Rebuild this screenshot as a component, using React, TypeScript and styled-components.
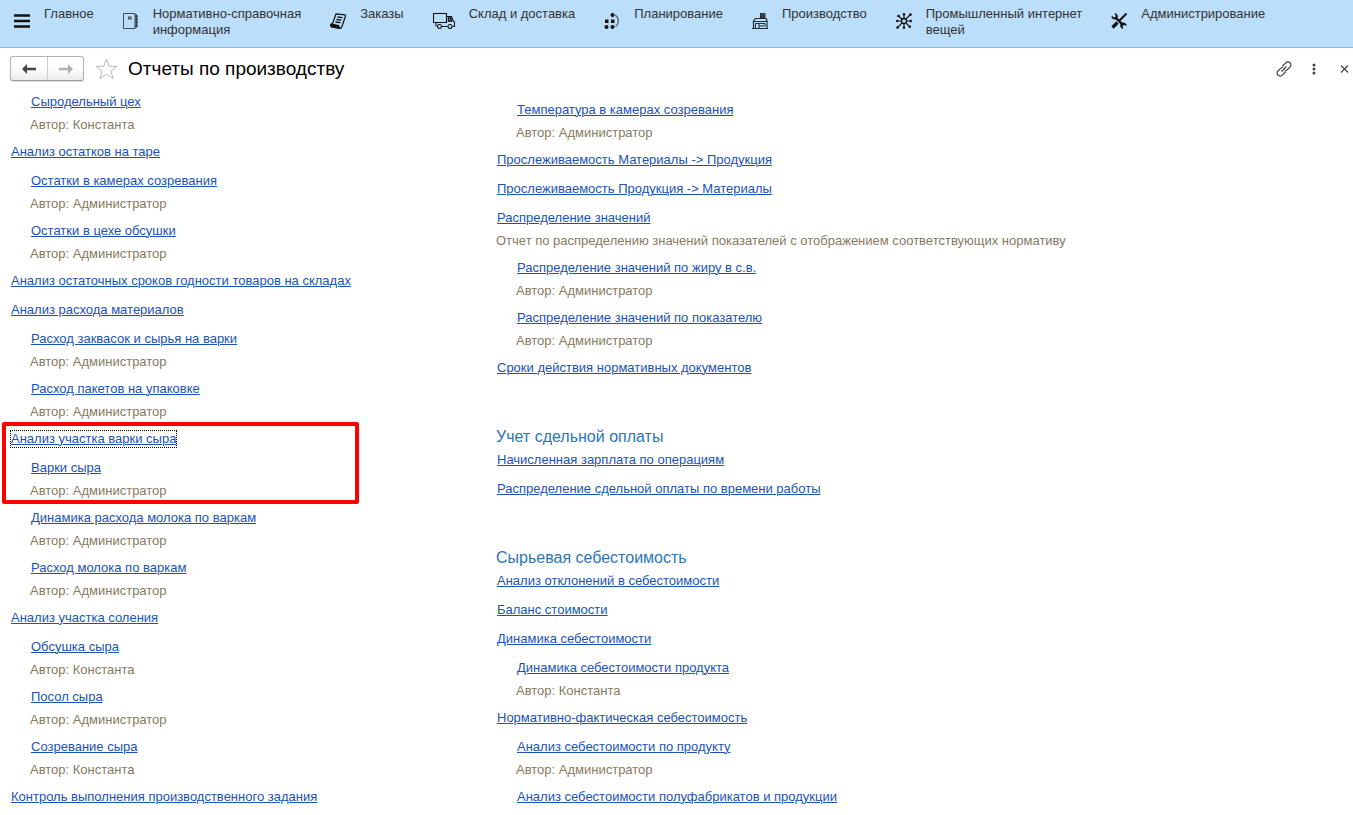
import React from 'react';
import styled, { createGlobalStyle, css } from 'styled-components';

const GlobalStyle = createGlobalStyle`
  *, *::after { box-sizing: border-box; }
  body {
    margin: 0;
    background: #fff;
    color: #000;
    font: 13px/16px "Liberation Sans", Arial, sans-serif;
  }
  button { font: inherit; color: inherit; cursor: pointer; }
`;

const NavBar = styled.nav`
  display: flex;
  align-items: flex-start;
  gap: 29px;
  min-height: 48px;
  padding: 6px 14px 8px;
  background: #bbdefb;
  border-bottom: 1px solid #93b3d3;
`;

const NavItem = styled.button`
  display: flex;
  align-items: flex-start;
  gap: 14px;
  padding: 0;
  border: 0;
  background: none;
  color: #333;
  text-align: left;
  white-space: pre-line;
`;

const NavIcon = styled.svg`
  flex: none;
  margin-top: 7px;
  color: #111;
`;

const TitleBar = styled.header`
  display: flex;
  align-items: center;
  height: 45px;
  padding: 0 3px 4px 10px;
`;

const History = styled.div`
  display: flex;
  height: 25px;
  border: 1px solid #b3b3b3;
  border-bottom-color: #999;
  border-radius: 3px;
  background: linear-gradient(#fff 40%, #ececec);
  box-shadow: 0 1px 1px #ddd;
`;

const HistoryButton = styled.button`
  display: flex;
  align-items: center;
  justify-content: center;
  width: 36px;
  padding: 0;
  border: 0;
  background: none;
  color: #444;
  & + & { border-left: 1px solid #ccc; }
  &:disabled { color: #b0b0b0; }
`;

const IconButton = styled.button`
  display: flex;
  padding: 0;
  border: 0;
  background: none;
  color: #444;
`;

const StarButton = styled(IconButton)`
  margin: 0 10px 0 11px;
`;

const Title = styled.h1`
  flex: 1;
  margin: 0;
  font-size: 19px;
  line-height: 24px;
  font-weight: 400;
`;

const Tools = styled.div`
  display: flex;
  align-items: center;
  gap: 14px;
`;

const Columns = styled.main`
  display: grid;
  grid-template-columns: minmax(0, 486px) minmax(0, 1fr);
  align-items: start;
  padding-left: 10px;
`;

const Column = styled.div<{ $lowered?: boolean }>`
  display: flex;
  flex-direction: column;
  gap: 50px;
  padding-top: ${(p) => (p.$lowered ? 8 : 0)}px;
`;

const List = styled.ul`
  display: flex;
  flex-direction: column;
  gap: 11px;
  margin: 0;
  padding: 0;
  list-style: none;
`;

const Entry = styled.li<{ $nested?: boolean }>`
  display: flex;
  flex-direction: column;
  align-items: flex-start;
  gap: 7px;
  padding-left: ${(p) => (p.$nested ? 20 : 0)}px;
`;

const ReportLink = styled.a<{ $focused?: boolean }>`
  border: 1px solid transparent;
  color: #1a53b5;
  text-decoration: underline;
  text-underline-offset: 1px;
  text-decoration-thickness: 1px;
  ${(p) =>
    p.$focused &&
    css`
      border: 1px dotted #000;
    `}
`;

const Note = styled.span`
  color: #857b5f;
  line-height: 14px;
`;

const SectionTitle = styled.h2`
  margin: 0 0 4px;
  color: #2d75b8;
  font-size: 16px;
  line-height: 20px;
  font-weight: 400;
`;

const Marked = styled.li`
  position: relative;
  &::after {
    content: "";
    position: absolute;
    top: -8px;
    left: -8px;
    width: 357px;
    bottom: -6px;
    border: 4px solid #fe0000;
    border-radius: 2px;
    pointer-events: none;
  }
`;

type Report = { name: string; note?: string; nested?: boolean; focused?: boolean };

const admin = 'Автор: Администратор';
const konstanta = 'Автор: Константа';

const leftTop: Report[] = [
  { name: 'Сыродельный цех', note: konstanta, nested: true },
  { name: 'Анализ остатков на таре' },
  { name: 'Остатки в камерах созревания', note: admin, nested: true },
  { name: 'Остатки в цехе обсушки', note: admin, nested: true },
  { name: 'Анализ остаточных сроков годности товаров на складах' },
  { name: 'Анализ расхода материалов' },
  { name: 'Расход заквасок и сырья на варки', note: admin, nested: true },
  { name: 'Расход пакетов на упаковке', note: admin, nested: true },
];

const leftMarked: Report[] = [
  { name: 'Анализ участка варки сыра', focused: true },
  { name: 'Варки сыра', note: admin, nested: true },
];

const leftBottom: Report[] = [
  { name: 'Динамика расхода молока по варкам', note: admin, nested: true },
  { name: 'Расход молока по варкам', note: admin, nested: true },
  { name: 'Анализ участка соления' },
  { name: 'Обсушка сыра', note: konstanta, nested: true },
  { name: 'Посол сыра', note: admin, nested: true },
  { name: 'Созревание сыра', note: konstanta, nested: true },
  { name: 'Контроль выполнения производственного задания' },
];

const rightTop: Report[] = [
  { name: 'Температура в камерах созревания', note: admin, nested: true },
  { name: 'Прослеживаемость Материалы -> Продукция' },
  { name: 'Прослеживаемость Продукция -> Материалы' },
  {
    name: 'Распределение значений',
    note: 'Отчет по распределению значений показателей с отображением соответствующих нормативу',
  },
  { name: 'Распределение значений по жиру в с.в.', note: admin, nested: true },
  { name: 'Распределение значений по показателю', note: admin, nested: true },
  { name: 'Сроки действия нормативных документов' },
];

const piecework: Report[] = [
  { name: 'Начисленная зарплата по операциям' },
  { name: 'Распределение сдельной оплаты по времени работы' },
];

const rawCost: Report[] = [
  { name: 'Анализ отклонений в себестоимости' },
  { name: 'Баланс стоимости' },
  { name: 'Динамика себестоимости' },
  { name: 'Динамика себестоимости продукта', note: konstanta, nested: true },
  { name: 'Нормативно-фактическая себестоимость' },
  { name: 'Анализ себестоимости по продукту', note: admin, nested: true },
  { name: 'Анализ себестоимости полуфабрикатов и продукции', nested: true },
];

const Entries = ({ items }: { items: Report[] }) => (
  <>
    {items.map((r) => (
      <Entry key={r.name} $nested={r.nested}>
        <ReportLink href="#" $focused={r.focused}>{r.name}</ReportLink>
        {r.note && <Note>{r.note}</Note>}
      </Entry>
    ))}
  </>
);

type Section = { label: string; width?: number; icon: React.ReactNode };

const sections: Section[] = [
  {
    label: 'Главное',
    icon: <path d="M0 2.500h16M0 8h16M0 13.500h16" stroke="currentColor" strokeWidth="2.600" />,
  },
  {
    label: 'Нормативно-справочная\nинформация',
    icon: (
      <g fill="none" stroke="#3c4a56">
        <path d="M.5.5h11.500v15H.5z" />
        <path d="M5.500 4h2.500v2H5.500z" strokeWidth="1.200" />
        <path d="M12 1.500h1.500v13H12" />
        <path d="M12 3.500h3M12 6.500h3M12 9.500h3M12 12.500h3" strokeWidth="1.800" />
      </g>
    ),
  },
  {
    label: 'Заказы',
    icon: (
      <g fill="none" stroke="currentColor" strokeLinejoin="round">
        <path d="M6 .8l9 1c.6.1.8.5.6 1L12 13.500c-.5 1.500-1.200 2-2.500 1.800L2 14c-1.300-.3-1.700-1.700-1-3h1.500z" strokeWidth="1.200" />
        <path d="M1 11l8 1.500c0 1.500.5 2.500 1.200 2.700L2 14.200C1 14 .5 12.500 1 11z" fill="currentColor" />
        <path d="M7.500 4l5 .6M6.500 6.500l5 .6M5.500 9l5 .7" strokeWidth="1.300" />
      </g>
    ),
  },
  {
    label: 'Склад и доставка',
    width: 22,
    icon: (
      <g fill="none" stroke="currentColor" strokeWidth="1.100">
        <path d="M3 13.500V9.500H.5v-9h13v9H3M14 3.500h4.500l1.500 4 1.500 1.500v4.500h-2M8.500 13.500h6M13.500 9.500v-6" />
        <path d="M15.500 5h2l1 3h-3z" strokeWidth="1.400" />
        <circle cx="6.500" cy="13.500" r="2" />
        <circle cx="17" cy="13.500" r="2" />
      </g>
    ),
  },
  {
    label: 'Планирование',
    icon: (
      <g fill="currentColor">
        <circle cx="8.500" cy="2" r="2" />
        <path d="M1 6.500h3.500v3.500H1z" />
        <path d="M7 6.500h3.500v3.500H7z" />
        <circle cx="2.500" cy="14" r="2" />
        <circle cx="8.500" cy="14" r="2" />
        <path d="M11 2c4 2 4.500 9 .5 11.500" fill="none" stroke="#4b5d6c" strokeWidth="1.200" />
      </g>
    ),
  },
  {
    label: 'Производство',
    icon: (
      <g fill="none" stroke="#222c34">
        <path d="M1.500 15V8l2-2.500H14l1 2V15M0 15.500h16M1.500 8.500H15" strokeWidth="1.200" />
        <path d="M3.500 15v-4.500H7V15M7 10.500h6V13H7" />
        <path d="M8 0h5.500v5.500H8z" fill="#222c34" stroke="none" />
        <path d="M10 0v4M12 0v4" stroke="#6a7d8e" strokeWidth=".6" />
      </g>
    ),
  },
  {
    label: 'Промышленный интернет\nвещей',
    icon: (
      <g fill="currentColor" stroke="currentColor">
        <circle cx="8" cy="8" r="2.500" fill="none" strokeWidth="1.300" />
        <path d="M8 1v4.500M8 10.500V15M1 8h4.500M10.500 8H15M2 2.500l4.200 3.700M14.500 1.500L9.800 6.200M1.500 14.500l4.700-4.700M9.800 9.800l4 4" strokeWidth="1.200" />
        <circle cx="8" cy="1.200" r="1.200" stroke="none" />
        <circle cx="8" cy="14.800" r="1.200" stroke="none" />
        <circle cx="1.200" cy="8" r="1.200" stroke="none" />
        <circle cx="14.800" cy="8" r="1.200" stroke="none" />
        <circle cx="2.500" cy="3" r="1.300" stroke="none" />
        <circle cx="14.500" cy="1.500" r="1.300" stroke="none" />
        <circle cx="1.500" cy="14.500" r="1.300" stroke="none" />
        <circle cx="13.800" cy="13.800" r="1.300" stroke="none" />
      </g>
    ),
  },
  {
    label: 'Администрирование',
    icon: (
      <g fill="none" stroke="currentColor">
        <path d="M4 4l8.500 8.500" strokeWidth="2.400" />
        <path d="M1 3.500A3 3 0 0 0 5.500 5 3 3 0 0 0 4 .8M15 12.500A3 3 0 0 0 10.500 11 3 3 0 0 0 12 15.200" strokeWidth="1.800" />
        <path d="M15.500.5L8.500 7.500" strokeWidth="2" />
        <path d="M6.500 9.500L1.500 14.500" strokeWidth="3.200" />
      </g>
    ),
  },
];

const ArrowIcon = () => (
  <svg width="14" height="12" viewBox="0 0 14 12" aria-hidden="true">
    <path d="M0 6l5-5v3.700h9v2.600H5V11z" fill="currentColor" />
  </svg>
);

const Flipped = styled.span`
  display: flex;
  transform: rotate(180deg);
`;

export default function App() {
  return (
    <>
      <GlobalStyle />
      <NavBar>
        {sections.map((s) => (
          <NavItem key={s.label} type="button">
            <NavIcon width={s.width ?? 16} height="16" viewBox={`0 0 ${s.width ?? 16} 16`} aria-hidden="true">
              {s.icon}
            </NavIcon>
            <span>{s.label}</span>
          </NavItem>
        ))}
      </NavBar>
      <TitleBar>
        <History>
          <HistoryButton type="button" aria-label="Назад">
            <ArrowIcon />
          </HistoryButton>
          <HistoryButton type="button" aria-label="Вперед" disabled>
            <Flipped>
              <ArrowIcon />
            </Flipped>
          </HistoryButton>
        </History>
        <StarButton type="button" aria-label="В избранное">
          <svg width="23" height="22" viewBox="0 0 23 22" aria-hidden="true">
            <path d="M11.500 1l2.700 7.300h7.800l-6.200 4.800 2.300 7.600-6.600-4.600-6.600 4.600 2.300-7.600L1 8.300h7.800z" fill="#fff" stroke="#b4bac2" />
          </svg>
        </StarButton>
        <Title>Отчеты по производству</Title>
        <Tools>
          <IconButton type="button" aria-label="Получить ссылку">
            <svg width="16" height="16" viewBox="0 0 16 16" fill="none" stroke="currentColor" strokeWidth="1.200" aria-hidden="true">
              <path d="M6.500 5l3.200-3.200a2.900 2.900 0 0 1 4.300 0 2.900 2.900 0 0 1 0 4.200L10.800 9.200a2.900 2.900 0 0 1-2.300.8M9.500 11l-3.200 3.200a2.900 2.900 0 0 1-4.300 0 2.900 2.900 0 0 1 0-4.200L5.200 6.800A2.900 2.900 0 0 1 7.500 6M5.500 10.500l5-5" />
            </svg>
          </IconButton>
          <IconButton type="button" aria-label="Еще">
            <svg width="16" height="16" viewBox="0 0 16 16" fill="currentColor" aria-hidden="true">
              <circle cx="8" cy="4" r="1.500" />
              <circle cx="8" cy="8" r="1.500" />
              <circle cx="8" cy="12" r="1.500" />
            </svg>
          </IconButton>
          <IconButton type="button" aria-label="Закрыть">
            <svg width="14" height="16" viewBox="0 0 14 16" stroke="currentColor" strokeWidth="1.200" aria-hidden="true">
              <path d="M5 4.500l7 7M12 4.500l-7 7" />
            </svg>
          </IconButton>
        </Tools>
      </TitleBar>
      <Columns>
        <Column>
          <List>
            <Entries items={leftTop} />
            <Marked>
              <List>
                <Entries items={leftMarked} />
              </List>
            </Marked>
            <Entries items={leftBottom} />
          </List>
        </Column>
        <Column $lowered>
          <List>
            <Entries items={rightTop} />
          </List>
          <section>
            <SectionTitle>Учет сдельной оплаты</SectionTitle>
            <List>
              <Entries items={piecework} />
            </List>
          </section>
          <section>
            <SectionTitle>Сырьевая себестоимость</SectionTitle>
            <List>
              <Entries items={rawCost} />
            </List>
          </section>
        </Column>
      </Columns>
    </>
  );
}
